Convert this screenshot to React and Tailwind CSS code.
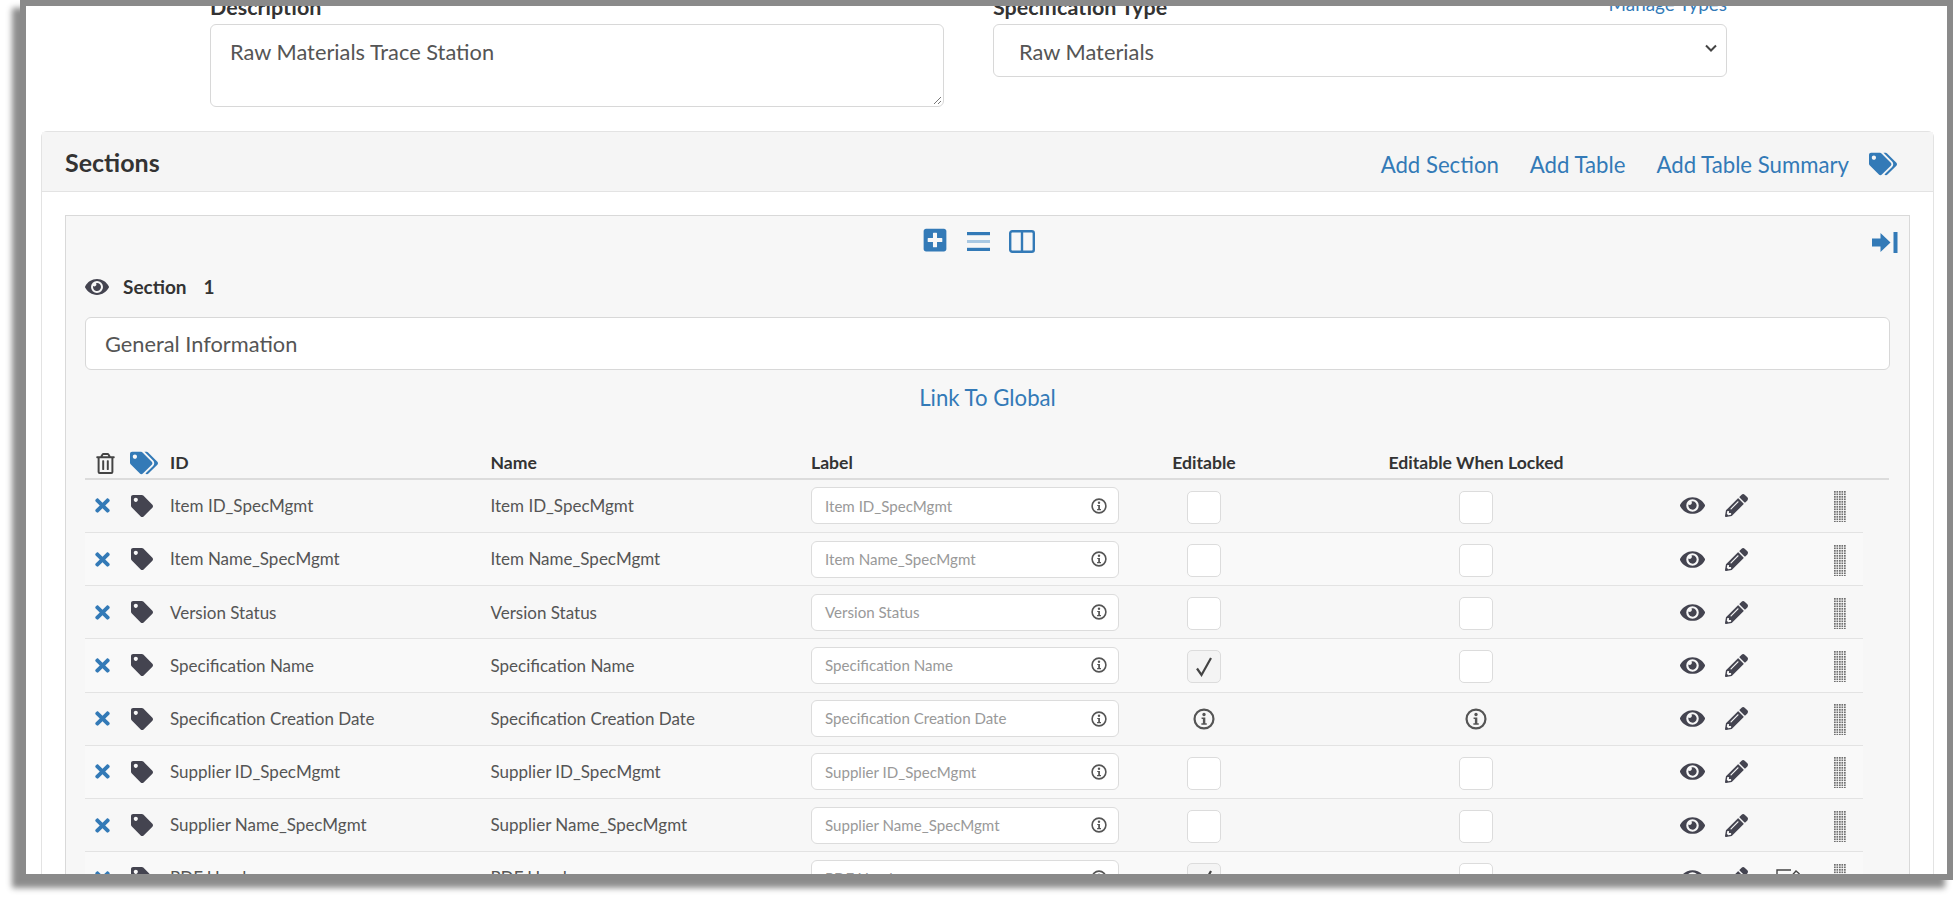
import React from "react";
import { FaPlusSquare, FaTags, FaTag, FaTimes, FaEye, FaPencilAlt, FaRegTrashAlt } from "react-icons/fa";

const rows = [
  { id: "Item ID_SpecMgmt" },
  { id: "Item Name_SpecMgmt" },
  { id: "Version Status" },
  { id: "Specification Name", editable: true },
  { id: "Specification Creation Date", info: true },
  { id: "Supplier ID_SpecMgmt" },
  { id: "Supplier Name_SpecMgmt" },
  { id: "PDF Header", editable: true, extra: true },
];

const gridCols = "grid grid-cols-[40px_45px_320.5px_320.5px_308px_170px_374px_59px_30px_70px_41px] items-center";

const InfoIcon = ({ size = 16 }) => (
  <svg width={size} height={size} viewBox="0 0 20 20" fill="none" className="text-[#555]">
    <circle cx="10" cy="10" r="8.6" stroke="currentColor" strokeWidth="2" />
    <circle cx="10" cy="5.9" r="1.5" fill="currentColor" />
    <path d="M7.8 8.6h3.4v5.2h1.3v1.5H7.6v-1.5h1.4v-3.7H7.8z" fill="currentColor" />
  </svg>
);

const DragHandle = () => (
  <svg width="12" height="31" className="text-[#6f6f6f]">
    <defs>
      <pattern id="dots" width="2.5" height="2.5" patternUnits="userSpaceOnUse">
        <rect width="1.7" height="1.7" fill="currentColor" />
      </pattern>
    </defs>
    <rect width="12" height="31" fill="url(#dots)" />
  </svg>
);

const ArrowToRight = () => (
  <svg width="26" height="21" viewBox="0 0 26 21" fill="currentColor" className="text-[#337ab7]">
    <path d="M0 6.5h8.5V1l10 9.5-10 9.5v-5.5H0z" />
    <rect x="21.5" y="0" width="4" height="21" />
  </svg>
);

const BarsIcon = () => (
  <svg width="23" height="19" viewBox="0 0 23 19" className="mb-[2px]">
    <rect y="0" width="23" height="3.2" fill="#337ab7" />
    <rect y="8" width="23" height="3" fill="#a9c8e2" />
    <rect y="15.8" width="23" height="3.2" fill="#337ab7" />
  </svg>
);

const ColumnsIcon = () => (
  <svg width="26" height="23" viewBox="0 0 26 23" fill="none" stroke="currentColor" strokeWidth="2.4" className="text-[#337ab7]">
    <rect x="1.2" y="1.2" width="23.6" height="20.6" rx="2" />
    <path d="M13 2v20" />
  </svg>
);

const EditSquare = () => (
  <svg width="26" height="24" viewBox="0 0 26 24" fill="none" stroke="#444" strokeWidth="1.4">
    <path d="M16 4H2v18h17v-8" />
    <path d="M12 15l9-10 3 2.5-9 10-4 1.5z" />
  </svg>
);

const Checkbox = ({ checked }) => (
  <div className={`mt-[3px] flex h-[33px] w-[34px] items-center justify-center rounded-[5px] border-[1.5px] border-[#dcdcdc] ${checked ? "bg-[#f4f4f4]" : "bg-white"}`}>
    {checked && (
      <svg width="18" height="22" viewBox="0 0 18 22" fill="none" stroke="#444" strokeWidth="2.2">
        <path d="M2 12.5l4.5 6.5L16 2" />
      </svg>
    )}
  </div>
);

const Row = ({ row, index }) => (
  <div className={`${gridCols} h-[53.2px] w-[1778px] border-b border-[#e3e3e3] text-[17px] text-[#555] ${index % 2 === 1 ? "bg-[#f9f9f9]" : ""}`}>
    <FaTimes className="ml-[7px] text-[21px] text-[#337ab7]" />
    <FaTag className="ml-[6px] text-[22px] text-[#444450]" />
    <div>{row.id}</div>
    <div>{row.id}</div>
    <div className="flex h-[37px] w-[308px] items-center justify-between rounded-[6px] border-[1.5px] border-[#dcdcdc] bg-white pl-[13px] pr-[11px] text-[15.1px] text-[#999]">
      <span>{row.id}</span>
      <InfoIcon />
    </div>
    <div className="flex justify-center">
      {row.info ? <InfoIcon size={22} /> : <Checkbox checked={row.editable} />}
    </div>
    <div className="flex justify-center">
      {row.info ? <InfoIcon size={22} /> : <Checkbox />}
    </div>
    <FaEye className="ml-[17px] text-[25px] text-[#444450]" />
    <FaPencilAlt className="ml-[3px] text-[23px] text-[#444450]" />
    <div className="pl-[23px]">{row.extra && <EditSquare />}</div>
    <div className="mt-[2px] pl-[12px]"><DragHandle /></div>
  </div>
);

export default function App() {
  return (
    <div className="h-[900px] w-full overflow-hidden bg-white pl-[20px] font-['Lato','Noto_Sans',sans-serif]">
      <div className="h-[880px] overflow-hidden border-[6px] border-[#8a8a8a] bg-white shadow-[-8px_8px_6px_rgba(0,0,0,0.45)]">
        <div className="-mt-[10px] pl-[15px] pr-[13px]">
          {/* Description / spec type */}
          <div className="ml-[169px] grid grid-cols-[734px_734px] gap-x-[49px]">
            <div>
              <div className="h-[28px] text-[21.5px] leading-[23px] font-bold text-[#333]">Description</div>
              <div className="relative h-[83px] rounded-[6px] border-[1.5px] border-[#d8d8d8] px-[19px] pt-[14px] text-[21.8px] leading-[25px] text-[#555]">
                Raw Materials Trace Station
                <svg width="9" height="9" viewBox="0 0 9 9" stroke="#777" className="absolute right-[1px] bottom-[1px]">
                  <path d="M1 8l7-7M5 8l3-3" />
                </svg>
              </div>
            </div>
            <div>
              <div className="flex h-[28px] items-start justify-between text-[21.5px] leading-[23px]">
                <span className="font-bold text-[#333]">Specification Type</span>
                <span className="text-[18.9px] leading-[16px] text-[#337ab7]">Manage Types</span>
              </div>
              <div className="flex h-[53px] items-center justify-between rounded-[6px] border-[1.5px] border-[#d8d8d8] pl-[25px] pr-[9px] pt-[3px] text-[21.8px] text-[#555]">
                Raw Materials
                <svg width="12" height="8" viewBox="0 0 12 8" fill="none" stroke="#444" strokeWidth="2" className="-mt-[8px]">
                  <path d="M1 1.5l5 5 5-5" />
                </svg>
              </div>
            </div>
          </div>

          {/* Sections panel */}
          <div className="mt-[24px] rounded-t-[6px] border border-[#e3e3e3] pb-[30px]">
            <div className="flex h-[60px] items-center justify-between border-b border-[#e3e3e3] bg-[#f5f5f5] pl-[23px] pr-[36px]">
              <h3 className="pt-[3px] text-[25px] font-bold text-[#333]">Sections</h3>
              <div className="flex items-center gap-[31px] pt-[6px] text-[22.2px] text-[#337ab7]">
                <span>Add Section</span>
                <span>Add Table</span>
                <span className="flex items-center gap-[20px]">
                  Add Table Summary
                  <FaTags className="text-[28px]" />
                </span>
              </div>
            </div>

            <div className="mx-[23px] mt-[23px] h-[700px] border border-[#d9d9d9] bg-[#f7f7f7] px-[19px]">
              <div className="relative flex h-[37px] items-end justify-center gap-[19px] pr-[18px]">
                <FaPlusSquare className="text-[26px] text-[#337ab7]" />
                <BarsIcon />
                <ColumnsIcon />
                <div className="absolute right-[-8px] bottom-[0px]"><ArrowToRight /></div>
              </div>

              <div className="mt-[20px] flex items-center gap-[14px] text-[19px] font-bold text-[#333]">
                <FaEye className="text-[24px] text-[#444450]" />
                <span>Section</span>
                <span className="ml-[3px]">1</span>
              </div>

              <div className="mt-[15px] flex h-[53px] items-center rounded-[6px] border-[1.5px] border-[#d8d8d8] bg-white px-[19px] pt-[3px] text-[21.8px] text-[#555]">
                General Information
              </div>

              <div className="mt-[11px] text-center text-[22.2px] text-[#337ab7]">Link To Global</div>

              <div className={`${gridCols} mt-[35px] h-[31px] w-[1804px] border-b-[2px] border-[#dcdcdc] text-[17.6px] font-bold text-[#333]`}>
                <FaRegTrashAlt className="ml-[10px] text-[21px] text-[#444]" />
                <FaTags className="ml-[5px] text-[28px] text-[#337ab7]" />
                <div>ID</div>
                <div>Name</div>
                <div>Label</div>
                <div className="text-center">Editable</div>
                <div className="text-center">Editable When Locked</div>
              </div>
              {rows.map((row, i) => (
                <Row key={row.id} row={row} index={i} />
              ))}
            </div>
          </div>
        </div>
      </div>
    </div>
  );
}
